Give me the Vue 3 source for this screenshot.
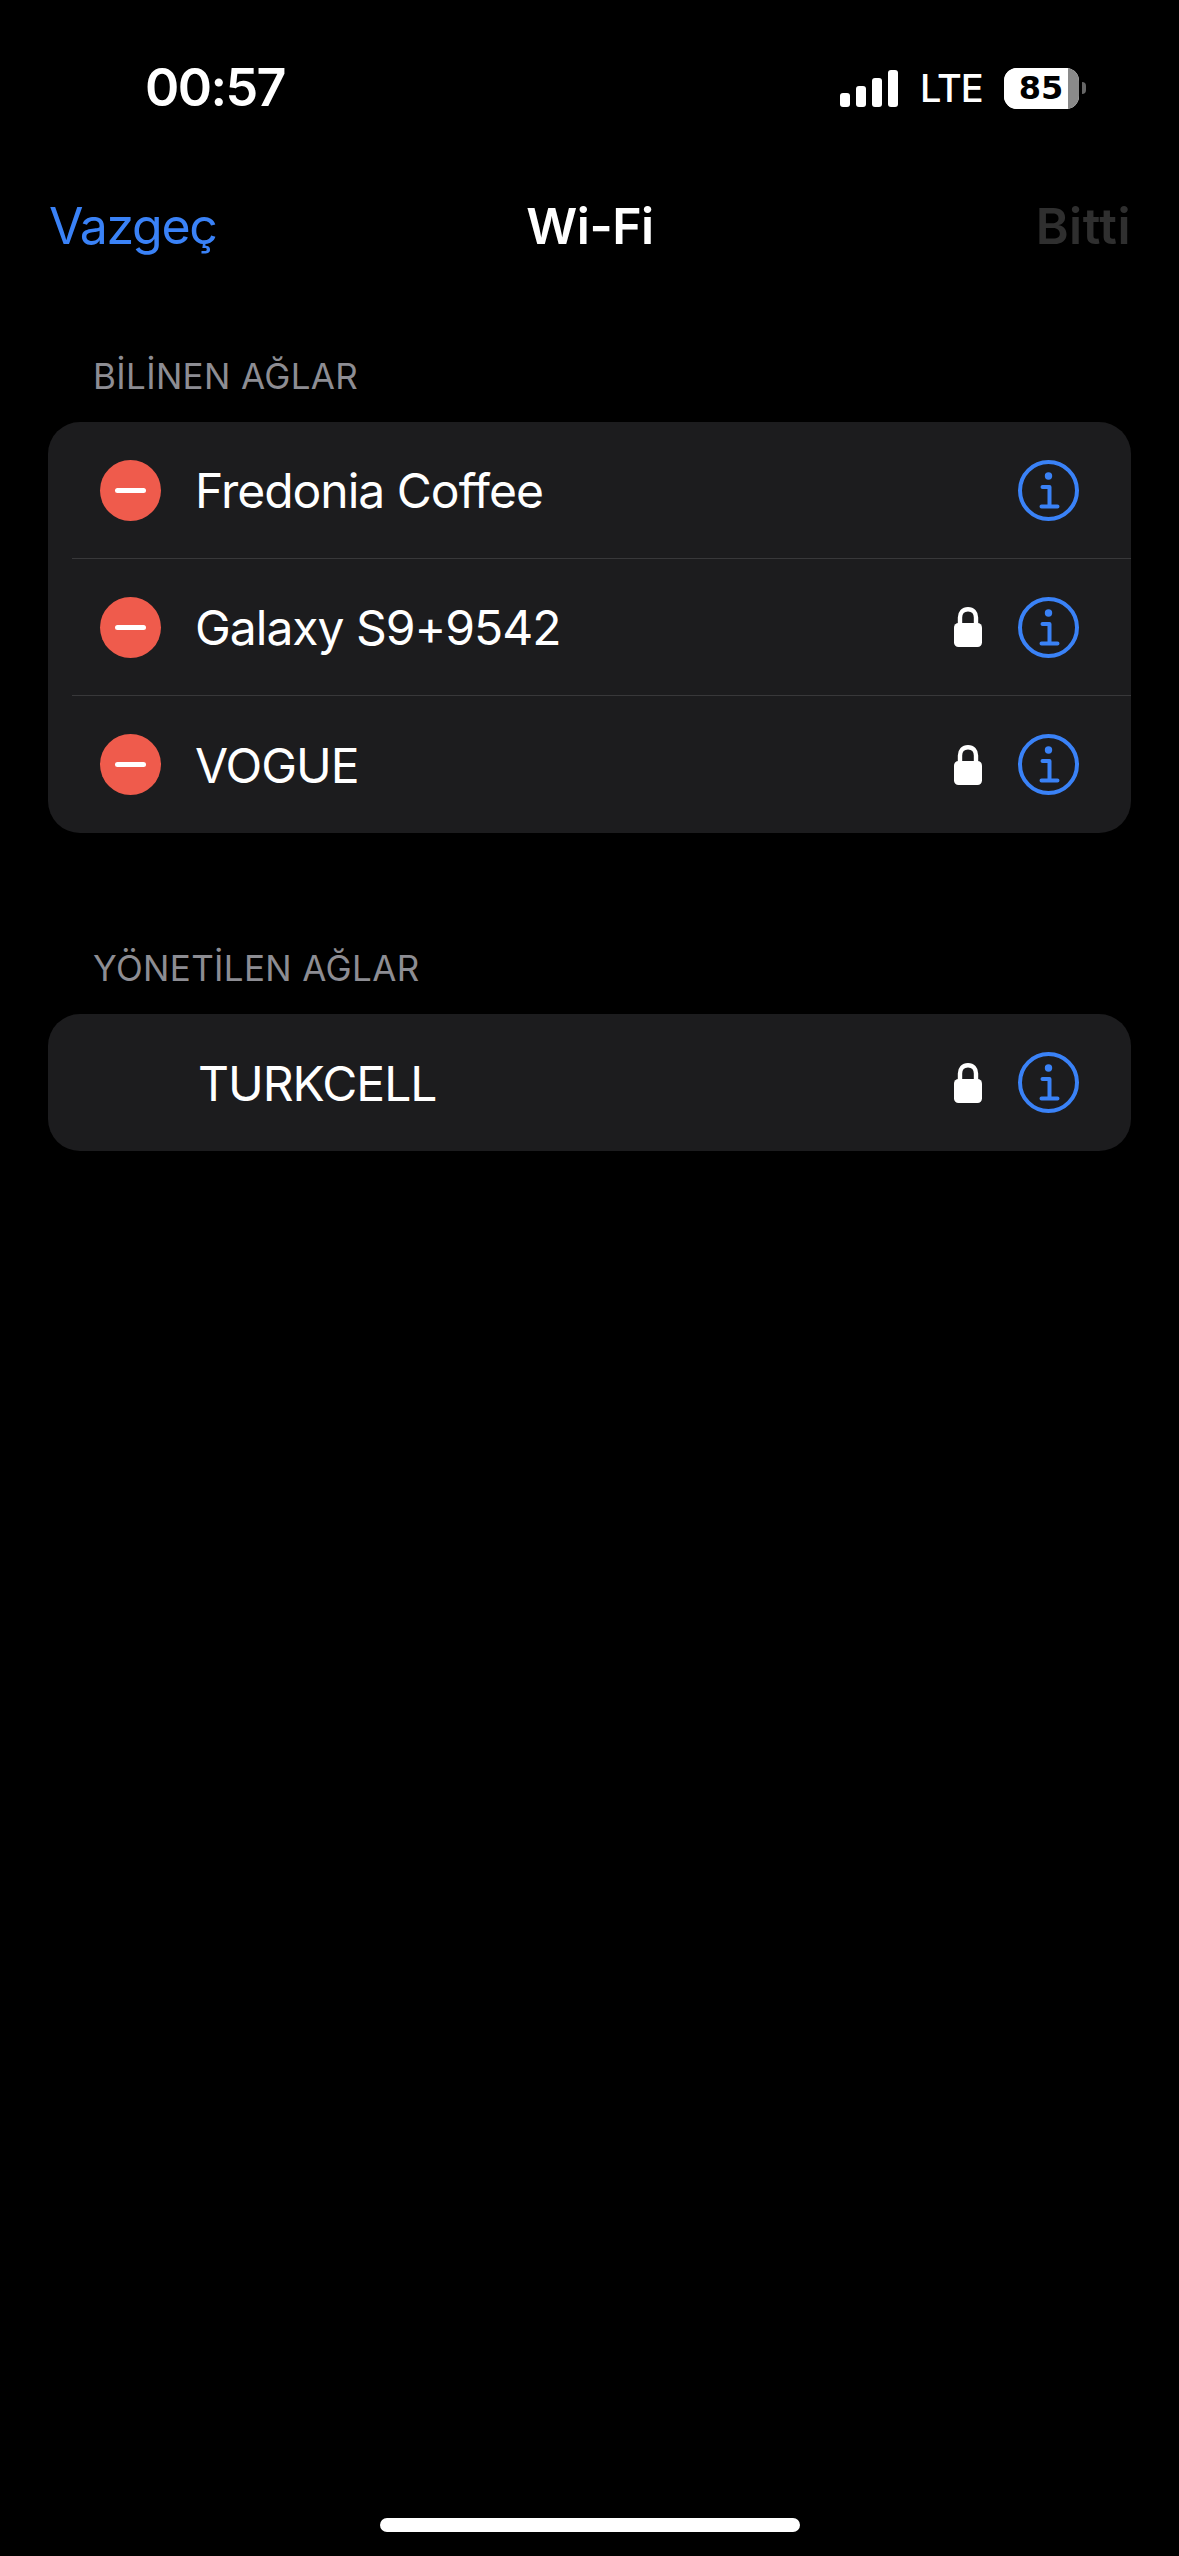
<script setup>
const sections = [
  {
    title: 'BİLİNEN AĞLAR',
    first: true,
    rows: [
      { name: 'Fredonia Coffee', removable: true, locked: false },
      { name: 'Galaxy S9+9542', removable: true, locked: true },
      { name: 'VOGUE', removable: true, locked: true },
    ],
  },
  {
    title: 'YÖNETİLEN AĞLAR',
    first: false,
    rows: [{ name: 'TURKCELL', removable: false, locked: true }],
  },
]
const bars = [14, 21, 29, 37]
</script>

<template>
  <div class="screen">
    <header class="status">
      <span class="time">00:57</span>
      <div class="indicators">
        <div class="signal">
          <span v-for="h in bars" :key="h" class="bar" :style="{ height: h + 'px' }"></span>
        </div>
        <span class="lte">LTE</span>
        <div class="battery">
          <div class="battery-body">
            <span class="battery-level">85</span>
            <span class="battery-empty"></span>
          </div>
          <span class="battery-cap"></span>
        </div>
      </div>
    </header>

    <nav class="nav">
      <span class="cancel">Vazgeç</span>
      <span class="title">Wi-Fi</span>
      <span class="done">Bitti</span>
    </nav>

    <section v-for="s in sections" :key="s.title">
      <h2 class="section-title" :class="{ later: !s.first }">{{ s.title }}</h2>
      <div class="card">
        <div v-for="r in s.rows" :key="r.name" class="row">
          <div class="row-inner" :class="{ managed: !r.removable }">
            <span v-if="r.removable" class="remove"><span class="minus"></span></span>
            <span class="name">{{ r.name }}</span>
            <svg v-if="r.locked" class="lock" viewBox="0 0 28 40" width="28" height="40">
              <path d="M6 18V10.500C6 5.500 9 2.200 14 2.200s8 3.300 8 8.300V18" fill="none" stroke="#fff" stroke-width="4.400" />
              <rect x="0" y="16" width="28" height="24" rx="4.500" fill="#fff" />
            </svg>
            <svg class="info" viewBox="0 0 61 61" width="61" height="61">
              <circle cx="30.500" cy="30.500" r="28.500" fill="none" stroke="#3a82f7" stroke-width="4" />
              <circle cx="30.500" cy="16" r="3.700" fill="#3a82f7" />
              <path d="M24.500 27H31.500V46M23.500 46.500H39.500" fill="none" stroke="#3a82f7" stroke-width="4" stroke-linecap="round" stroke-linejoin="round" />
            </svg>
          </div>
        </div>
      </div>
    </section>

    <div class="home"></div>
  </div>
</template>

<style>
html, body { margin: 0; background: #000; }
</style>

<style scoped>
.screen {
  width: 1179px;
  height: 2556px;
  background: #000;
  color: #fff;
  font-family: Inter, Roboto, "Liberation Sans", sans-serif;
  position: relative;
  overflow: hidden;
}
.status {
  height: 176px;
  box-sizing: border-box;
  padding: 0 93px 0 145px;
  display: flex;
  align-items: center;
  justify-content: space-between;
}
.time {
  font-size: 52px;
  font-weight: 600;
  letter-spacing: -1.6px;
  line-height: 1;
}
.indicators {
  display: flex;
  align-items: center;
}
.signal {
  display: flex;
  align-items: flex-end;
  gap: 6px;
  height: 37px;
  margin-right: 22px;
}
.bar {
  width: 10px;
  background: #fff;
  border-radius: 3px;
}
.lte {
  font-size: 38px;
  font-weight: 500;
  line-height: 1;
  width: 84px;
  letter-spacing: -1px;
}
.battery {
  display: flex;
  align-items: center;
  gap: 3px;
}
.battery-body {
  width: 75px;
  height: 41px;
  border-radius: 13px;
  overflow: hidden;
  display: flex;
  background: #fff;
}
.battery-level {
  width: 64px;
  background: #fff;
  color: #000;
  font-family: "DejaVu Sans", Inter, sans-serif;
  font-size: 32px;
  font-weight: 700;
  line-height: 41px;
  text-align: center;
  padding-left: 10px;
  box-sizing: border-box;
}
.battery-empty {
  flex: 1;
  background: #8a8a8a;
}
.battery-cap {
  width: 4px;
  height: 12px;
  background: #666;
  border-radius: 0 6px 6px 0;
}
.nav {
  height: 100px;
  box-sizing: border-box;
  padding: 0 48px 0 49px;
  display: grid;
  grid-template-columns: 1fr auto 1fr;
  align-items: center;
  font-size: 50px;
  line-height: 1;
}
.cancel {
  color: #3a82f7;
  letter-spacing: -1.3px;
}
.title {
  font-weight: 600;
  letter-spacing: -0.5px;
}
.done {
  color: #2f2f2f;
  font-weight: 600;
  text-align: right;
  letter-spacing: 0.5px;
}
.section-title {
  margin: 0;
  padding: 76px 0 22px 93px;
  font-size: 35px;
  font-weight: 400;
  line-height: 48px;
  letter-spacing: 0.35px;
  color: #8d8d93;
}
.section-title.later {
  padding-top: 111px;
}
.card {
  margin: 0 48px;
  background: #1c1c1e;
  border-radius: 32px;
  overflow: hidden;
}
.row {
  padding-left: 24px;
}
.row-inner {
  height: 137px;
  box-sizing: border-box;
  padding: 0 52px 0 28px;
  display: flex;
  align-items: center;
  border-bottom: 1px solid #38383a;
}
.row:last-child .row-inner {
  border-bottom: 0;
}
.row-inner.managed {
  padding-left: 126px;
}
.remove {
  width: 61px;
  height: 61px;
  border-radius: 50%;
  background: #ef5b4c;
  display: flex;
  align-items: center;
  justify-content: center;
  margin-right: 34px;
  flex: none;
}
.minus {
  width: 31px;
  height: 5px;
  border-radius: 3px;
  background: #fff;
}
.name {
  flex: 1;
  font-size: 48px;
  font-weight: 400;
  line-height: 1;
  letter-spacing: -1px;
  padding-top: 2px;
}
.lock {
  margin-right: 36px;
  flex: none;
}
.info {
  flex: none;
}
.home {
  position: absolute;
  left: 380px;
  top: 2518px;
  width: 420px;
  height: 14px;
  border-radius: 7px;
  background: #fff;
}
</style>
